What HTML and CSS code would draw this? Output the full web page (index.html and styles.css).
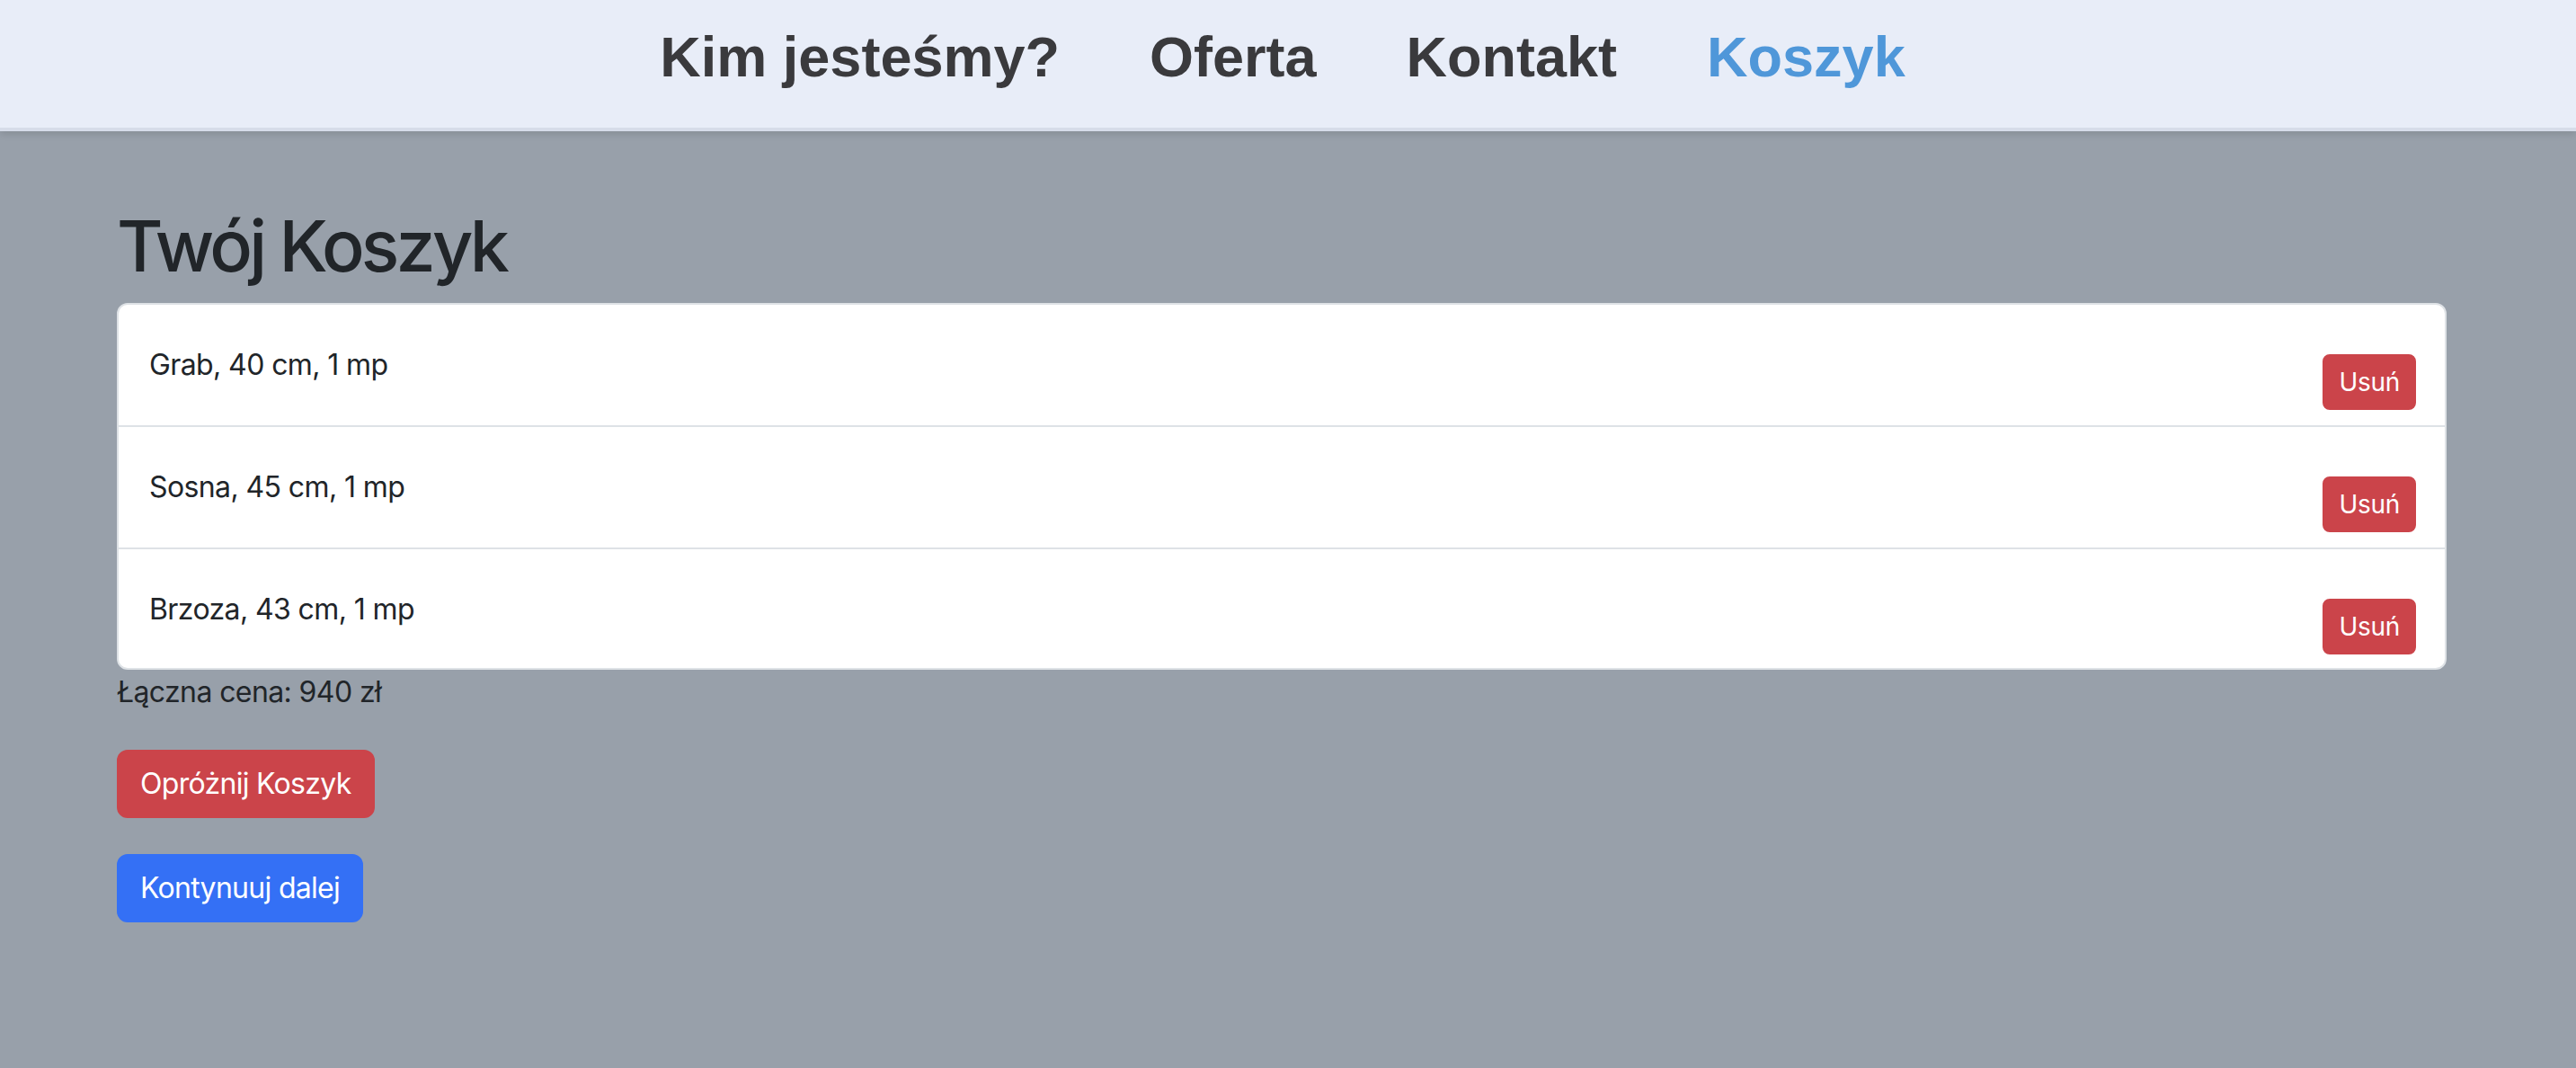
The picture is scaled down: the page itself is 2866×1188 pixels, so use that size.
FILE: index.html
```html
<!DOCTYPE html>
<html lang="pl">
<head>
<meta charset="utf-8">
<title>Twój Koszyk</title>
<link rel="stylesheet" href="styles.css">
</head>
<body>
<header class="topbar">
  <nav class="nav">
    <a class="nav-link" href="#">Kim jesteśmy?</a>
    <a class="nav-link" href="#">Oferta</a>
    <a class="nav-link" href="#">Kontakt</a>
    <a class="nav-link active" href="#">Koszyk</a>
  </nav>
</header>
<main class="container">
  <h1 class="title">Twój Koszyk</h1>
  <ul class="list">
    <li class="item"><span class="item-name">Grab, 40 cm, 1 mp</span><button class="btn btn-sm btn-danger">Usuń</button></li>
    <li class="item"><span class="item-name">Sosna, 45 cm, 1 mp</span><button class="btn btn-sm btn-danger">Usuń</button></li>
    <li class="item"><span class="item-name">Brzoza, 43 cm, 1 mp</span><button class="btn btn-sm btn-danger">Usuń</button></li>
  </ul>
  <p class="total">Łączna cena: 940 zł</p>
  <div class="actions">
    <button class="btn btn-danger">Opróżnij Koszyk</button>
    <button class="btn btn-primary">Kontynuuj dalej</button>
  </div>
</main>
</body>
</html>
```
FILE: styles.css
```css
html, body {
  margin: 0;
  padding: 0;
}
body {
  background: #98a0aa;
  font-family: Inter, "Noto Sans", sans-serif;
  color: #212529;
  min-height: 1188px;
}
.topbar {
  background: #e8edf8;
  height: 142px;
  border-bottom: 4px solid #d6dce9;
  box-shadow: 0 3px 8px rgba(0, 0, 0, 0.12);
  position: relative;
}
.nav {
  display: flex;
  justify-content: center;
  gap: 100px;
  padding: 27px 12px 0 0;
}
.nav-link {
  font-family: "Liberation Sans", Arial, sans-serif;
  font-weight: 700;
  font-size: 63px;
  line-height: normal;
  color: #3a3a3d;
  text-decoration: none;
}
.nav-link.active {
  color: #4f97d9;
}
.container {
  width: 2592px;
  margin: 0 0 0 130px;
  padding-top: 79px;
}
.title {
  font-family: Inter, "Noto Sans", sans-serif;
  font-weight: 500;
  font-size: 79px;
  line-height: 96px;
  margin: 0 0 16px;
  letter-spacing: -3.8px;
}
.list {
  list-style: none;
  margin: 0;
  padding: 0;
  background: #fff;
  border: 2px solid #dee2e6;
  border-radius: 12px;
  overflow: hidden;
}
.item {
  display: flex;
  justify-content: space-between;
  align-items: flex-end;
  height: 134px;
  box-sizing: border-box;
  padding: 16px 32px 17px 34px;
}
.item + .item {
  border-top: 2px solid #dee2e6;
  height: 136px;
}
.item + .item:last-child {
  height: 134px;
  padding-bottom: 15px;
}
.item-name {
  align-self: center;
  font-size: 32px;
  line-height: 48px;
  letter-spacing: -0.6px;
}
.total {
  margin: 1px 0 0;
  font-size: 32px;
  line-height: 48px;
  letter-spacing: -0.6px;
}
.actions {
  display: flex;
  flex-direction: column;
  align-items: flex-start;
}
.btn {
  font-family: Inter, "Noto Sans", sans-serif;
  font-size: 32px;
  line-height: 48px;
  padding: 12px 24px;
  border: 2px solid transparent;
  border-radius: 12px;
  color: #fff;
  margin-top: 40px;
  cursor: pointer;
  letter-spacing: -0.7px;
}
.btn-sm {
  font-size: 28px;
  line-height: 42px;
  padding: 8px 16px;
  border-radius: 8px;
  margin-top: 0;
  letter-spacing: -0.3px;
}
.btn-danger {
  background: #cb444a;
  border-color: #cb444a;
}
.btn-primary {
  background: #3470f5;
  border-color: #3470f5;
}
```
